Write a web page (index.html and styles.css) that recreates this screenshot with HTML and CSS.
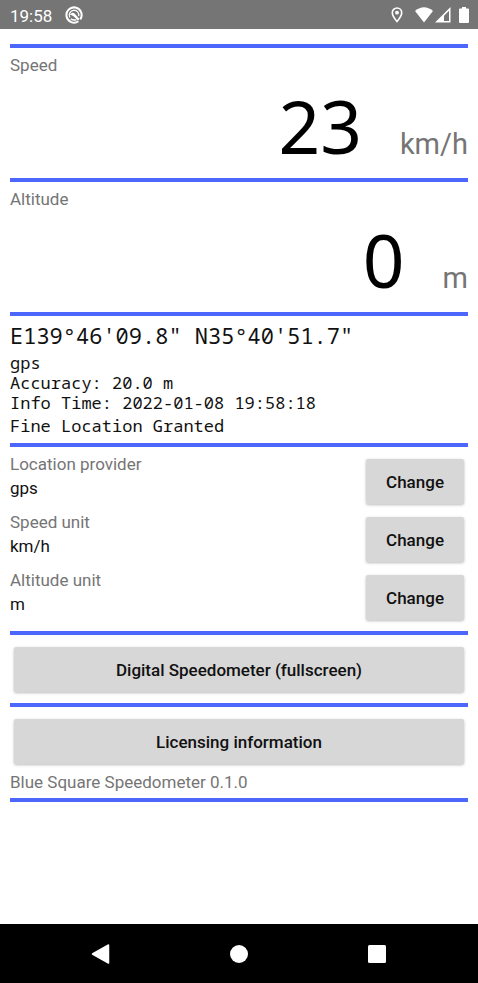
FILE: index.html
```html
<!DOCTYPE html>
<html lang="en">
<head>
<meta charset="utf-8">
<meta name="viewport" content="width=device-width, initial-scale=1">
<title>Blue Square Speedometer</title>
<link rel="stylesheet" href="styles.css">
</head>
<body>
<header class="status">
  <span class="clock">19:58</span>
  <svg class="app-icon" width="18" height="18" viewBox="0 0 18 18" fill="none" stroke="#fff">
    <path d="M13.400 15.200A7.600 7.600 0 1 1 15.200 13.400" stroke-width="2"/>
    <path d="M4.900 11.500A4.800 4.800 0 1 1 13.700 10.200" stroke-width="1.300"/>
    <path d="M4.800 8.500Q7.500 5.400 10.300 8.200L14.500 13L13 14.500L8.500 10.200Q6.800 9 4.800 8.500Z" fill="#fff" stroke="none"/>
    <path d="M5.800 12.800Q8.500 14.800 11.500 13.600" stroke-width="1.500"/>
  </svg>
  <span class="status-icons">
    <svg width="12" height="16" viewBox="0 0 12 16"><path d="M6 1A4.700 4.700 0 0 0 1.300 5.700C1.300 9 6 14.500 6 14.500S10.700 9 10.700 5.700A4.700 4.700 0 0 0 6 1Z" fill="none" stroke="#fff" stroke-width="1.600"/><circle cx="6" cy="5.700" r="1.900" fill="#fff"/></svg>
    <svg class="wifi" width="18" height="16" viewBox="0 0 18 16"><path d="M0 4Q9-3.500 18 4L9 15.500Z" fill="#fff"/></svg>
    <svg class="signal" width="16" height="16" viewBox="0 0 16 16"><path d="M0 15.500L15.500 0V15.500ZM9 8.700V14H14V3.700Z" fill="#fff" fill-rule="evenodd"/></svg>
    <svg class="battery" width="10" height="16" viewBox="0 0 10 16"><path d="M3 0H7V1.500H9Q10 1.500 10 2.500V15Q10 16 9 16H1Q0 16 0 15V2.500Q0 1.500 1 1.500H3Z" fill="#fff"/></svg>
  </span>
</header>
<main>
  <section class="reading">
    <h2 class="label">Speed</h2>
    <p class="measure"><span class="value">23</span><span class="unit">km/h</span></p>
  </section>
  <section class="reading">
    <h2 class="label">Altitude</h2>
    <p class="measure"><span class="value">0</span><span class="unit">m</span></p>
  </section>
  <section class="position">
    <p class="coordinates">E139°46'09.8" N35°40'51.7"</p>
    <p>gps<br>Accuracy: 20.0 m<br>Info Time: 2022-01-08 19:58:18</p>
    <p class="permission">Fine Location Granted</p>
  </section>
  <section class="settings">
    <div class="setting">
      <div><h2 class="label" id="provider">Location provider</h2><p class="current">gps</p></div>
      <button type="button" aria-describedby="provider">Change</button>
    </div>
    <div class="setting">
      <div><h2 class="label" id="speed-unit">Speed unit</h2><p class="current">km/h</p></div>
      <button type="button" aria-describedby="speed-unit">Change</button>
    </div>
    <div class="setting">
      <div><h2 class="label" id="altitude-unit">Altitude unit</h2><p class="current">m</p></div>
      <button type="button" aria-describedby="altitude-unit">Change</button>
    </div>
  </section>
  <section class="action"><button type="button">Digital Speedometer (fullscreen)</button></section>
  <section class="action about"><button type="button">Licensing information</button><p class="label">Blue Square Speedometer 0.1.0</p></section>
</main>
<nav class="navbar">
  <button type="button" aria-label="Back"><svg width="20" height="20" viewBox="0 0 20 20"><path d="M1.500 10L17.500 1V19Z" fill="#fff" stroke="#fff" stroke-width="1.500" stroke-linejoin="round"/></svg></button>
  <button type="button" aria-label="Home"><svg width="20" height="20" viewBox="0 0 20 20"><circle cx="10" cy="10" r="9" fill="#fff"/></svg></button>
  <button type="button" aria-label="Overview"><svg width="20" height="20" viewBox="0 0 20 20"><rect x="1" y="1" width="18" height="18" rx="1.500" fill="#fff"/></svg></button>
</nav>
</body>
</html>
```
FILE: styles.css
```css
* { box-sizing: border-box; }
body {
  margin: 0;
  min-height: 100vh;
  display: flex;
  flex-direction: column;
  background: #fff;
  color: #111;
  font: 17px/20px Roboto, sans-serif;
}
h2, p { margin: 0; }
button { font: inherit; border: 0; color: #111; }

.status {
  display: flex;
  align-items: center;
  height: 29px;
  padding: 0 9px 0 10px;
  background: #757575;
  color: #fff;
}
.clock { padding-top: 2px; }
.app-icon { margin-left: 13px; }
.status-icons { display: flex; margin-left: auto; }
.wifi { margin-left: 12px; }
.signal { margin-left: 2px; }
.battery { margin-left: 8px; }

main {
  flex: 1;
  display: flex;
  flex-direction: column;
  margin: 15px 10px 0;
}
section { border-top: 4px solid #4d66fb; }
.label { font-size: 17px; font-weight: 400; color: #757575; }

.reading { padding: 7px 0 6px; }
.measure {
  display: flex;
  justify-content: flex-end;
  align-items: baseline;
  gap: 38px;
  padding-top: 4px;
}
.value { font-family: "Droid Sans Mono", "Noto Sans", sans-serif; font-size: 73px; line-height: 93px; color: #000; }
.unit { font-size: 29px; line-height: 30px; color: #757575; }

.position {
  padding: 4px 0 7px;
  font-family: "Droid Sans Mono", "Noto Sans Mono", "DejaVu Sans Mono", monospace;
}
.coordinates { padding-bottom: 3px; font-size: 22px; line-height: 30px; }
.permission { padding-top: 3px; }

.settings { display: grid; gap: 1px; padding: 6px 0 5px; }
.setting { display: flex; justify-content: space-between; }
.setting .label { padding-top: 1px; }
.current { padding-top: 4px; }
.setting button, .action button {
  height: 45px;
  margin: 6px 4px;
  padding: 0 20px;
  border-radius: 2px;
  background: #d7d7d7;
  font-weight: 500;
  box-shadow: 0 1px 3px #0004;
}

.action { display: flex; flex-direction: column; padding: 6px 0 5px; }
.about { padding-bottom: 6px; border-bottom: 4px solid #4d66fb; }
.about .label { padding-top: 2px; }

.navbar {
  display: flex;
  justify-content: center;
  align-items: center;
  gap: 78px;
  height: 59px;
  background: #000;
}
.navbar button { display: grid; place-items: center; width: 60px; height: 48px; padding: 0; background: none; }
```
